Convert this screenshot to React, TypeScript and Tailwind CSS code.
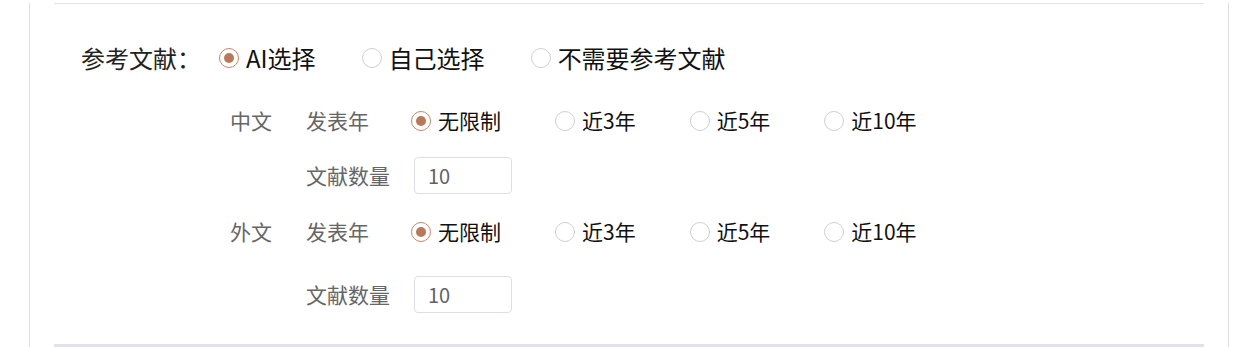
import { useState } from "react";

const font = { fontFamily: '"Noto Sans CJK SC", "Noto Sans", sans-serif' };

function Radio({
  label,
  checked,
  onClick,
  big,
}: {
  label: string;
  checked: boolean;
  onClick: () => void;
  big?: boolean;
}) {
  return (
    <label
      onClick={onClick}
      className={`flex items-center cursor-pointer text-[#111] ${
        big ? "text-[24px] mr-[46px] gap-[7px]" : "text-[21px] mr-[54px] gap-[7px]"
      }`}
    >
      <span
        className={`flex items-center justify-center w-[20px] h-[20px] rounded-full border bg-white ${
          checked ? "border-[#c4876b]" : "border-[#cfcfd4]"
        }`}
      >
        {checked && <span className="w-[10px] h-[10px] rounded-full bg-[#b9785a]" />}
      </span>
      <span>{label}</span>
    </label>
  );
}

const years = ["无限制", "近3年", "近5年", "近10年"];

function LangBlock({ lang, gapTop }: { lang: string; gapTop: string }) {
  const [year, setYear] = useState(0);
  const [count, setCount] = useState("10");
  return (
    <div>
      <div className="flex items-center h-[36px]">
        <span className="w-[76px] text-[21px] text-[#666]">{lang}</span>
        <span className="w-[105px] text-[21px] text-[#666]">发表年</span>
        {years.map((y, i) => (
          <Radio key={y} label={y} checked={year === i} onClick={() => setYear(i)} />
        ))}
      </div>
      <div className={`flex items-center ${gapTop}`}>
        <span className="w-[76px]" />
        <span className="w-[108px] text-[21px] text-[#666]">文献数量</span>
        <input
          value={count}
          onChange={(e) => setCount(e.target.value)}
          className="w-[98px] h-[37px] px-[13px] rounded-[4px] border border-[#dcdfe6] text-[20px] text-[#606266] outline-none"
          style={font}
        />
      </div>
    </div>
  );
}

export default function App() {
  const [mode, setMode] = useState(0);
  const modes = ["AI选择", "自己选择", "不需要参考文献"];

  return (
    <div className="w-[1236px] h-[347px] bg-white overflow-hidden" style={font}>
      <div className="ml-[29px] w-[1200px] h-full border-x border-[#dcdde8] px-[24px]">
        <div className="mt-[3px] border-t border-[#e4e4e7] pl-[27px] pt-[34px] pb-[31px] border-b-[3px] border-b-[#e0e1eb]">
          <div className="flex items-center h-[40px]">
            <span className="w-[138px] text-[24px] text-[#222]">参考文献：</span>
            {modes.map((m, i) => (
              <Radio key={m} label={m} big checked={mode === i} onClick={() => setMode(i)} />
            ))}
          </div>
          <div className="mt-[25px] pl-[149px]">
            <LangBlock lang="中文" gapTop="mt-[18px]" />
            <div className="mt-[20px]">
              <LangBlock lang="外文" gapTop="mt-[26px]" />
            </div>
          </div>
        </div>
      </div>
    </div>
  );
}
